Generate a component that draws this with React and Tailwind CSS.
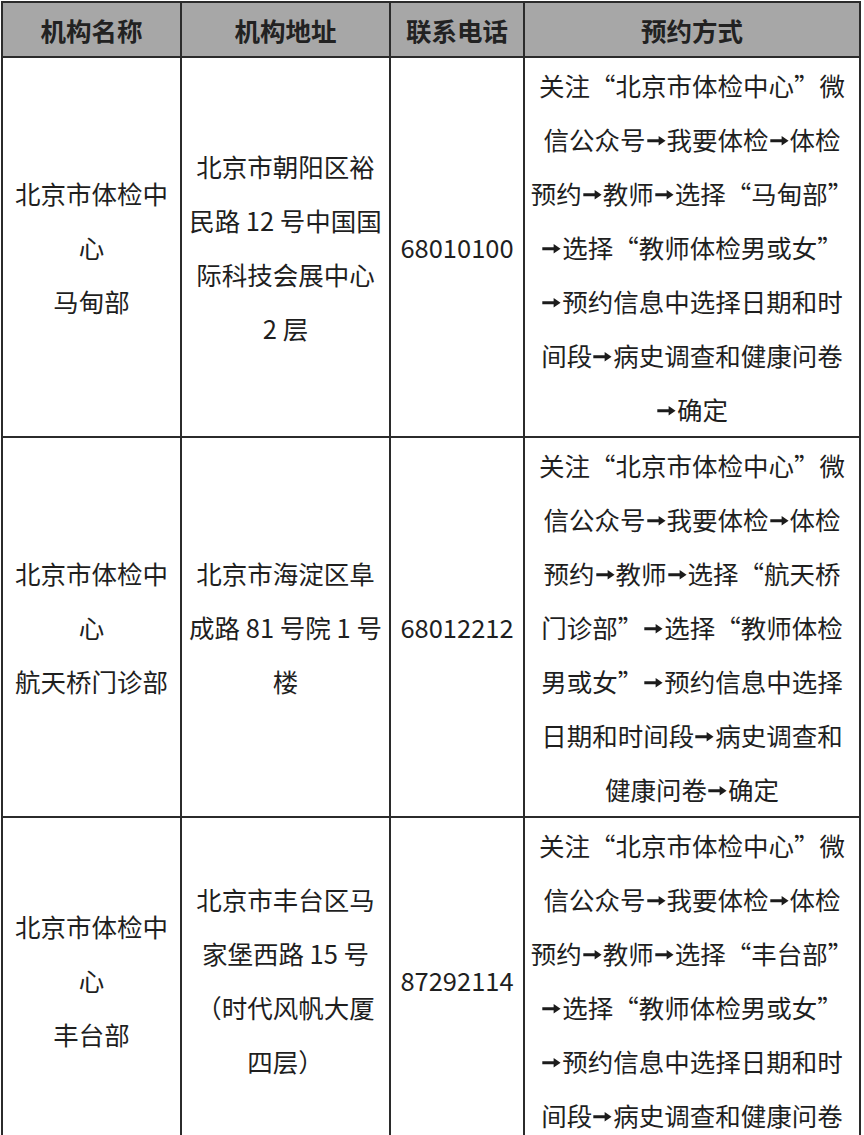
import React from "react";

const A = "→";

const rows = [
  {
    name: ["北京市体检中", "心", "马甸部"],
    addr: ["北京市朝阳区裕", "民路 12 号中国国", "际科技会展中心", "2 层"],
    phone: "68010100",
    way: [
      "关注“北京市体检中心”微",
      `信公众号${A}我要体检${A}体检`,
      `预约${A}教师${A}选择“马甸部”`,
      `${A}选择“教师体检男或女”`,
      `${A}预约信息中选择日期和时`,
      `间段${A}病史调查和健康问卷`,
      `${A}确定`,
    ],
  },
  {
    name: ["北京市体检中", "心", "航天桥门诊部"],
    addr: ["北京市海淀区阜", "成路 81 号院 1 号", "楼"],
    phone: "68012212",
    way: [
      "关注“北京市体检中心”微",
      `信公众号${A}我要体检${A}体检`,
      `预约${A}教师${A}选择“航天桥`,
      `门诊部”${A}选择“教师体检`,
      `男或女”${A}预约信息中选择`,
      `日期和时间段${A}病史调查和`,
      `健康问卷${A}确定`,
    ],
  },
  {
    name: ["北京市体检中", "心", "丰台部"],
    addr: ["北京市丰台区马", "家堡西路 15 号", "（时代风帆大厦", "四层）"],
    phone: "87292114",
    way: [
      "关注“北京市体检中心”微",
      `信公众号${A}我要体检${A}体检`,
      `预约${A}教师${A}选择“丰台部”`,
      `${A}选择“教师体检男或女”`,
      `${A}预约信息中选择日期和时`,
      `间段${A}病史调查和健康问卷`,
    ],
  },
];

// the bold arrow in the source is drawn, the CJK fonts only have a thin one
const Arrow = () => (
  <svg viewBox="0 0 24 24" className="inline-block w-[0.82em] h-[1em] align-[-0.12em]">
    <path d="M1.5 10.4h13V6.6L22.5 12l-8 5.4v-3.8h-13z" fill="#1c1c1c" />
  </svg>
);

const Line = ({ text }) => {
  const parts = text.split(A);
  return (
    <div className="whitespace-nowrap">
      {parts.map((p, i) => (
        <React.Fragment key={i}>
          {i > 0 && <Arrow />}
          {p}
        </React.Fragment>
      ))}
    </div>
  );
};

const Cell = ({ lines }) => (
  <td className="border-2 border-[#2b2b2b] p-0 align-middle text-center">
    {lines.map((l, i) => (
      <Line key={i} text={l} />
    ))}
  </td>
);

export default function App() {
  return (
    <div className="bg-white w-[864px] h-[1135px] overflow-hidden pt-px pl-px">
      <table
        className="table-fixed border-collapse w-[858px] text-[25.5px] leading-[54px] text-[#1f1f1f]"
        style={{ fontFamily: '"Noto Sans CJK SC", "Noto Sans", sans-serif' }}
      >
        <colgroup>
          <col className="w-[179px]" />
          <col className="w-[209px]" />
          <col className="w-[134px]" />
          <col className="w-[336px]" />
        </colgroup>
        <thead>
          <tr className="bg-[#a7a7a7] h-[55px]">
            {["机构名称", "机构地址", "联系电话", "预约方式"].map((h) => (
              <th
                key={h}
                className="border-2 border-[#2b2b2b] p-0 font-bold text-[#222] leading-[51px] align-middle"
              >
                {h}
              </th>
            ))}
          </tr>
        </thead>
        <tbody>
          {rows.map((r) => (
            <tr key={r.phone}>
              <Cell lines={r.name} />
              <Cell lines={r.addr} />
              <Cell lines={[r.phone]} />
              <Cell lines={r.way} />
            </tr>
          ))}
        </tbody>
      </table>
    </div>
  );
}
